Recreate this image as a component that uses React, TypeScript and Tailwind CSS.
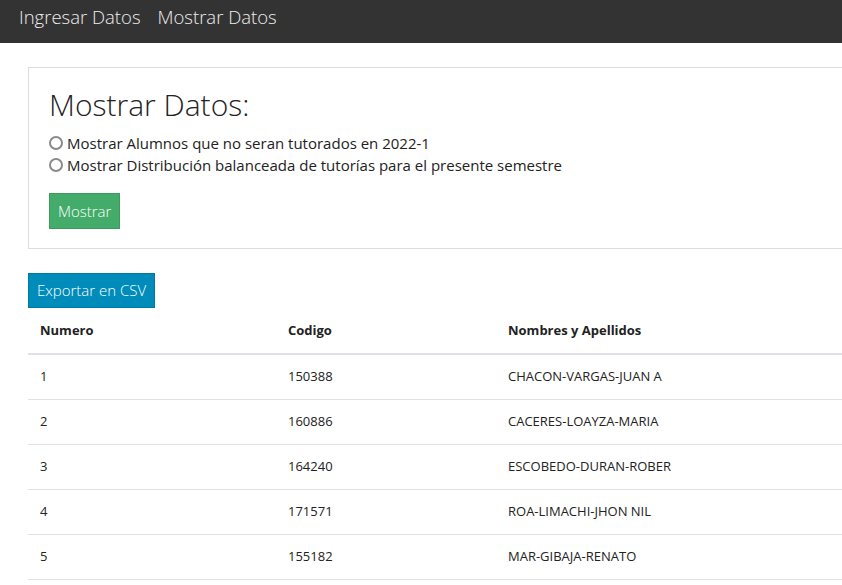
const rows = [
  { n: "1", code: "150388", name: "CHACON-VARGAS-JUAN A" },
  { n: "2", code: "160886", name: "CACERES-LOAYZA-MARIA" },
  { n: "3", code: "164240", name: "ESCOBEDO-DURAN-ROBER" },
  { n: "4", code: "171571", name: "ROA-LIMACHI-JHON NIL" },
  { n: "5", code: "155182", name: "MAR-GIBAJA-RENATO" },
]

function Radio({ label }: { label: string }) {
  return (
    <label className="flex items-center gap-[4px] h-[22px]">
      <span className="w-[14px] h-[14px] rounded-full border-2 border-[#8a8a8a] bg-white" />
      <span>{label}</span>
    </label>
  )
}

export default function App() {
  return (
    <div
      className="w-full min-h-[585px] overflow-hidden bg-white text-[#222]"
      style={{ fontFamily: '"Open Sans", "Liberation Sans", sans-serif' }}
    >
      <nav className="h-[43px] bg-[#333] flex items-start gap-[17px] pl-[19px] pt-[3px] text-[18.5px] font-light text-[#eee]">
        <a className="leading-[28px]">Ingresar Datos</a>
        <a className="leading-[28px]">Mostrar Datos</a>
      </nav>

      <div className="w-[1100px] ml-[28px] mt-[24px]">
        <div className="border border-[#ddd] px-[20px] pt-[17px] pb-[19px]">
          <h2 className="text-[30px] font-light leading-[40px] mb-[7px]">Mostrar Datos:</h2>
          <div className="text-[15px] leading-[22px]">
            <Radio label="Mostrar Alumnos que no seran tutorados en 2022-1" />
            <Radio label="Mostrar Distribución balanceada de tutorías para el presente semestre" />
          </div>
          <button className="mt-[17px] h-[36px] px-[8px] bg-[#43ac6a] border border-[#3c9a5f] text-white text-[15px] font-light">
            Mostrar
          </button>
        </div>

        <button className="mt-[24px] h-[35px] px-[8px] bg-[#008cba] border border-[#0079a1] text-white text-[15px] font-light">
          Exportar en CSV
        </button>

        <table className="w-full text-[13px] border-collapse">
          <thead>
            <tr className="border-b-2 border-[#dee2e6] h-[46px]">
              <th className="w-[248px] text-left font-bold px-[12px]">Numero</th>
              <th className="w-[220px] text-left font-bold px-[12px]">Codigo</th>
              <th className="text-left font-bold px-[12px]">Nombres y Apellidos</th>
            </tr>
          </thead>
          <tbody>
            {rows.map((r) => (
              <tr key={r.n} className="border-b border-[#dee2e6] h-[45px]">
                <td className="px-[12px]">{r.n}</td>
                <td className="px-[12px]">{r.code}</td>
                <td className="px-[12px]">{r.name}</td>
              </tr>
            ))}
          </tbody>
        </table>
      </div>
    </div>
  )
}
